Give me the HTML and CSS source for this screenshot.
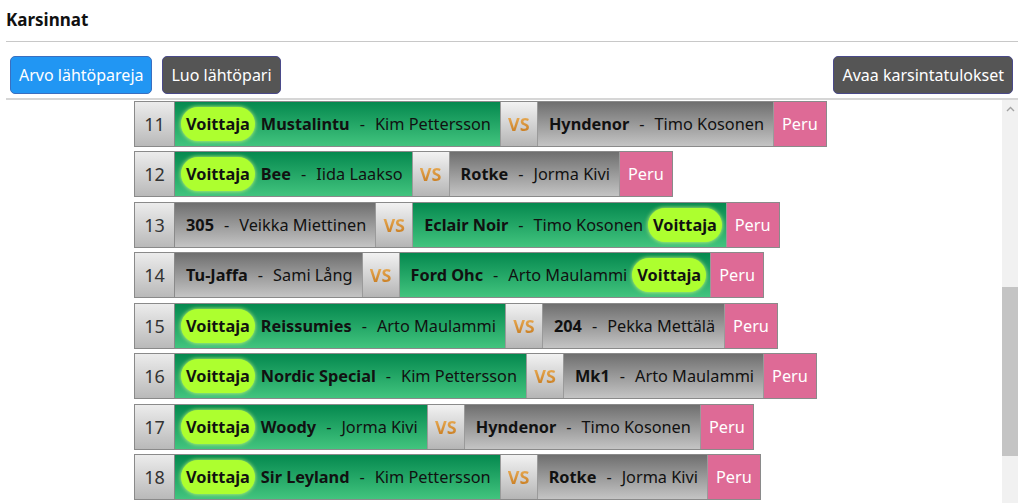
FILE: index.html
```html
<!DOCTYPE html>
<html>

<head>
    <title>Karsinnat</title>
    <link rel="stylesheet" href="styles.css">
</head>

<body>
    <div class="page">
        <h3 class="title">Karsinnat</h3>
        <hr class="rule">
        <div class="toolbar">
            <button class="btn btn-blue">Arvo lähtöpareja</button>
            <button class="btn btn-dark">Luo lähtöpari</button>
            <span class="spacer"></span>
            <button class="btn btn-dark">Avaa karsintatulokset</button>
        </div>
        <div class="list-wrap">
            <div class="list">
                <div class="pair">
                    <div class="num">11</div>
                    <div class="side win"><span class="badge">Voittaja</span><b>Mustalintu</b><span class="dash">-</span>Kim Pettersson</div>
                    <div class="vs"><span>VS</span></div>
                    <div class="side"><b>Hyndenor</b><span class="dash">-</span>Timo Kosonen</div>
                    <div class="cancel">Peru</div>
                </div>
                <div class="pair">
                    <div class="num">12</div>
                    <div class="side win"><span class="badge">Voittaja</span><b>Bee</b><span class="dash">-</span>Iida Laakso</div>
                    <div class="vs"><span>VS</span></div>
                    <div class="side"><b>Rotke</b><span class="dash">-</span>Jorma Kivi</div>
                    <div class="cancel">Peru</div>
                </div>
                <div class="pair">
                    <div class="num">13</div>
                    <div class="side"><b>305</b><span class="dash">-</span>Veikka Miettinen</div>
                    <div class="vs"><span>VS</span></div>
                    <div class="side win"><b>Eclair Noir</b><span class="dash">-</span>Timo Kosonen<span class="badge badge-end">Voittaja</span></div>
                    <div class="cancel">Peru</div>
                </div>
                <div class="pair">
                    <div class="num">14</div>
                    <div class="side"><b>Tu-Jaffa</b><span class="dash">-</span>Sami Lång</div>
                    <div class="vs"><span>VS</span></div>
                    <div class="side win"><b>Ford Ohc</b><span class="dash">-</span>Arto Maulammi<span class="badge badge-end">Voittaja</span></div>
                    <div class="cancel">Peru</div>
                </div>
                <div class="pair">
                    <div class="num">15</div>
                    <div class="side win"><span class="badge">Voittaja</span><b>Reissumies</b><span class="dash">-</span>Arto Maulammi</div>
                    <div class="vs"><span>VS</span></div>
                    <div class="side"><b>204</b><span class="dash">-</span>Pekka Mettälä</div>
                    <div class="cancel">Peru</div>
                </div>
                <div class="pair">
                    <div class="num">16</div>
                    <div class="side win"><span class="badge">Voittaja</span><b>Nordic Special</b><span class="dash">-</span>Kim Pettersson</div>
                    <div class="vs"><span>VS</span></div>
                    <div class="side"><b>Mk1</b><span class="dash">-</span>Arto Maulammi</div>
                    <div class="cancel">Peru</div>
                </div>
                <div class="pair">
                    <div class="num">17</div>
                    <div class="side win"><span class="badge">Voittaja</span><b>Woody</b><span class="dash">-</span>Jorma Kivi</div>
                    <div class="vs"><span>VS</span></div>
                    <div class="side"><b>Hyndenor</b><span class="dash">-</span>Timo Kosonen</div>
                    <div class="cancel">Peru</div>
                </div>
                <div class="pair">
                    <div class="num">18</div>
                    <div class="side win"><span class="badge">Voittaja</span><b>Sir Leyland</b><span class="dash">-</span>Kim Pettersson</div>
                    <div class="vs"><span>VS</span></div>
                    <div class="side"><b>Rotke</b><span class="dash">-</span>Jorma Kivi</div>
                    <div class="cancel">Peru</div>
                </div>
            </div>
            <div class="scrollbar">
                <div class="arrow">
                    <svg width="9" height="6" viewBox="0 0 9 6"><path d="M1 5 L4.5 1.5 L8 5" fill="none" stroke="#a3a3a3" stroke-width="1.4"/></svg>
                </div>
                <div class="thumb"></div>
            </div>
        </div>
    </div>
</body>

</html>
```

FILE: styles.css
```css
html, body {
    margin: 0;
    height: 100%;
    overflow: hidden;
}

body {
    font-family: "Segoe UI", "Noto Sans", sans-serif;
    font-size: 16.3px;
    color: #111;
    background: #fff;
}

.page {
    padding: 0 6px;
}

.title {
    margin: 0;
    padding-top: 8px;
    height: 33px;
    font-size: 17px;
    font-weight: bold;
}

.rule {
    margin: 0;
    border: none;
    border-top: 1px solid #c8c8c8;
    height: 0;
}

.toolbar {
    display: flex;
    align-items: center;
    gap: 10px;
    padding: 14px 5px 4px 4px;
}

.spacer {
    flex: 1;
}

.btn {
    height: 38px;
    padding: 0 8px;
    font-family: inherit;
    font-size: 16px;
    color: #fff;
    border: 1px solid #4a4a8a;
    border-radius: 5px;
    cursor: pointer;
}

.btn-blue {
    background-color: #2196f3;
    border-color: #3a6fc0;
}

.btn-dark {
    background-color: #555;
}

.list-wrap {
    display: flex;
    border-top: 2px solid #d6d6d6;
    height: 410px;
}

.list {
    flex: 1;
    overflow: hidden;
    padding: 1px 0 0 128px;
}

.pair {
    display: flex;
    width: max-content;
    height: 46px;
    margin-bottom: 4.43px;
    border: 1px solid #8a8a8a;
    box-sizing: border-box;
}

.num {
    width: 39px;
    display: flex;
    align-items: center;
    justify-content: center;
    font-size: 18px;
    color: #333;
    background: linear-gradient(#ececec, #b9b9b9);
    border-right: 1px solid #8a8a8a;
}

.side {
    display: flex;
    align-items: center;
    padding: 0 9px 0 11px;
    white-space: nowrap;
    background: linear-gradient(#6f6f6f, #c4c4c4);
}

.side.win {
    padding-left: 6px;
    background: linear-gradient(#05894f, #42c47e);
}

.side.win b:first-child {
    margin-left: 5px;
}

.side b {
    font-weight: bold;
}

.dash {
    margin: 0 10px;
}

.badge {
    font-weight: bold;
    background: #adff2f;
    border-radius: 18px;
    padding: 6px 5px;
    margin-right: 6px;
    box-shadow: 0 0 4px #d6ff70;
}

.badge-end {
    margin: 0 -5px 0 5px;
}

.vs {
    width: 36px;
    display: flex;
    align-items: center;
    justify-content: center;
    background: linear-gradient(#f2f2f2, #b5b5b5);
    border-left: 1px solid #9a9a9a;
    border-right: 1px solid #9a9a9a;
}

.vs span {
    font-size: 18px;
    font-weight: bold;
    background: linear-gradient(#f0b660, #c27418);
    -webkit-background-clip: text;
    background-clip: text;
    color: transparent;
}

.cancel {
    display: flex;
    align-items: center;
    padding: 0 8px;
    color: #fff;
    background: #de6a96;
    border-left: 1px solid #9a9a9a;
}

.scrollbar {
    width: 16px;
    background: #f1f1f1;
    display: flex;
    flex-direction: column;
    align-items: center;
}

.arrow {
    height: 17px;
    display: flex;
    align-items: center;
    justify-content: center;
}

.thumb {
    width: 16px;
    height: 169px;
    margin-top: 170px;
    background: #c4c4c4;
}
```
